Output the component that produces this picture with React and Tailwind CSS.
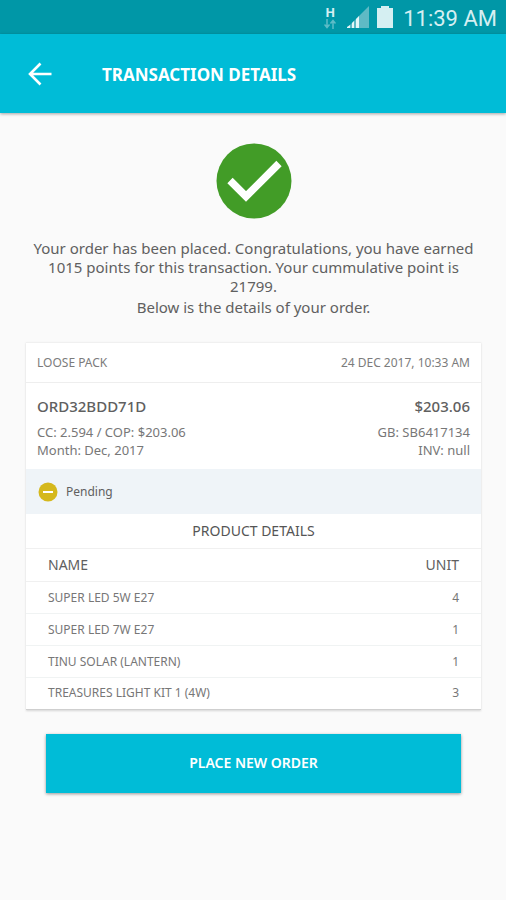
const products = [
  { name: 'SUPER LED 5W E27', unit: 4 },
  { name: 'SUPER LED 7W E27', unit: 1 },
  { name: 'TINU SOLAR (LANTERN)', unit: 1 },
  { name: 'TREASURES LIGHT KIT 1 (4W)', unit: 3 },
];

function StatusBar() {
  return (
    <div className="flex h-[34px] items-center justify-end bg-[#0097a7] pr-[9px] text-[#d5eff2]">
      <div className="mr-2 flex w-4 flex-col items-center">
        <span className="text-[13px] leading-[14px] font-bold">H</span>
        <svg className="h-2.5 w-3 text-[#5dbcc7]" viewBox="0 0 12 10" fill="none" stroke="currentColor" strokeWidth="1.5" aria-hidden="true">
          <path d="M3 0v8M.5 5.5 3 8.5l2.500-3M9 10V2M6.500 4.500 9 1.500l2.500 3" />
        </svg>
      </div>
      <svg className="mr-[7px] h-6 w-6" viewBox="0 0 24 24" aria-hidden="true">
        <path d="M1 23 23 1v22z" fill="#5ebac5" />
        <path d="M1 23v-1l3-2v3zM6 23v-5l2-2v7zM10 23v-9l3-3v12z" fill="#e4f6f8" />
      </svg>
      <svg className="mr-[10px] h-6 w-4" viewBox="0 0 16 24" fill="currentColor" aria-hidden="true">
        <path d="M4 1h8v2h4v20H0V3h4z" />
      </svg>
      <span className="pt-1 font-['Roboto','Noto_Sans',sans-serif] text-[22px] leading-[30px]">11:39 AM</span>
    </div>
  );
}

export default function App() {
  return (
    <div className="min-h-screen bg-[#fafafa] font-['Noto_Sans',sans-serif] text-[#606060]">
      <StatusBar />
      <header className="flex h-[79px] items-center bg-[#00bcd7] pl-7 text-white shadow-[0_1px_3px_rgba(0,0,0,0.35)]">
        <button type="button" aria-label="Back" className="mr-[50px] h-6 w-6">
          <svg viewBox="0 0 24 24" fill="none" stroke="currentColor" strokeWidth="2.600" aria-hidden="true">
            <path d="M23.500 12H2.500M12.500 1.500 2 12l10.500 10.500" />
          </svg>
        </button>
        <h1 className="pt-0.5 text-[17px] leading-6 font-bold">TRANSACTION DETAILS</h1>
      </header>

      <main className="pt-[30px] pr-[25px] pb-8 pl-[26px]">
        <svg className="mx-auto h-[76px] w-[76px]" viewBox="0 0 76 76" role="img" aria-label="Success">
          <circle cx="38" cy="38" r="37.500" fill="#429c27" />
          <path d="M14 37.500 30 53.500 63 20.500" fill="none" stroke="#fff" strokeWidth="7.500" />
        </svg>

        <div className="mt-5 text-center text-[15px] leading-[19px]">
          <p>Your order has been placed. Congratulations, you have earned 1015 points for this transaction. Your cummulative point is 21799.</p>
          <p className="mt-0.5">Below is the details of your order.</p>
        </div>

        <section className="mt-[25px] border-y border-t-[#f0f0f0] border-b-[#cfcfcf] bg-white shadow-[0_1px_2px_rgba(0,0,0,0.15)]">
          <div className="flex h-10 items-center justify-between border-b border-[#eeeeee] px-[11px] text-xs text-[#7c7c7c]">
            <span>LOOSE PACK</span>
            <span>24 DEC 2017, 10:33 AM</span>
          </div>
          <div className="px-[11px] pt-3 pb-2.5 text-[13px] leading-[18px] text-[#777]">
            <div className="mb-1.5 flex justify-between text-[15px] leading-[22px] font-medium text-[#606060]">
              <h2>ORD32BDD71D</h2>
              <span>$203.06</span>
            </div>
            <div className="flex justify-between">
              <span>CC: 2.594 / COP: $203.06</span>
              <span>GB: SB6417134</span>
            </div>
            <div className="flex justify-between">
              <span>Month: Dec, 2017</span>
              <span>INV: null</span>
            </div>
          </div>
          <div className="flex h-[45px] items-center gap-2 bg-[#eff4f8] px-3 text-xs">
            <svg className="h-5 w-5" viewBox="0 0 20 20" aria-hidden="true">
              <circle cx="10" cy="10" r="9.500" fill="#d5b81c" />
              <path d="M5 10h10" stroke="#fff" strokeWidth="2" />
            </svg>
            <span>Pending</span>
          </div>
          <table className="w-full text-xs">
            <caption className="h-[34px] text-sm leading-[34px] text-[#555]">PRODUCT DETAILS</caption>
            <thead>
              <tr className="h-[33px] border-y border-[#f0f0f0] text-sm text-[#606060]">
                <th scope="col" className="pl-[22px] text-left font-normal">NAME</th>
                <th scope="col" className="pr-[22px] text-right font-normal">UNIT</th>
              </tr>
            </thead>
            <tbody>
              {products.map((product) => (
                <tr key={product.name} className="h-8 border-b border-[#f0f3f3] text-[#777] last:h-[31px] last:border-b-0">
                  <td className="pl-[22px]">{product.name}</td>
                  <td className="pr-[22px] text-right">{product.unit}</td>
                </tr>
              ))}
            </tbody>
          </table>
        </section>

        <div className="mt-6 px-5">
          <button type="button" className="h-[59px] w-full bg-[#00bcd7] text-sm font-semibold text-white shadow-[0_1px_3px_rgba(0,0,0,0.4)]">
            PLACE NEW ORDER
          </button>
        </div>
      </main>
    </div>
  );
}
